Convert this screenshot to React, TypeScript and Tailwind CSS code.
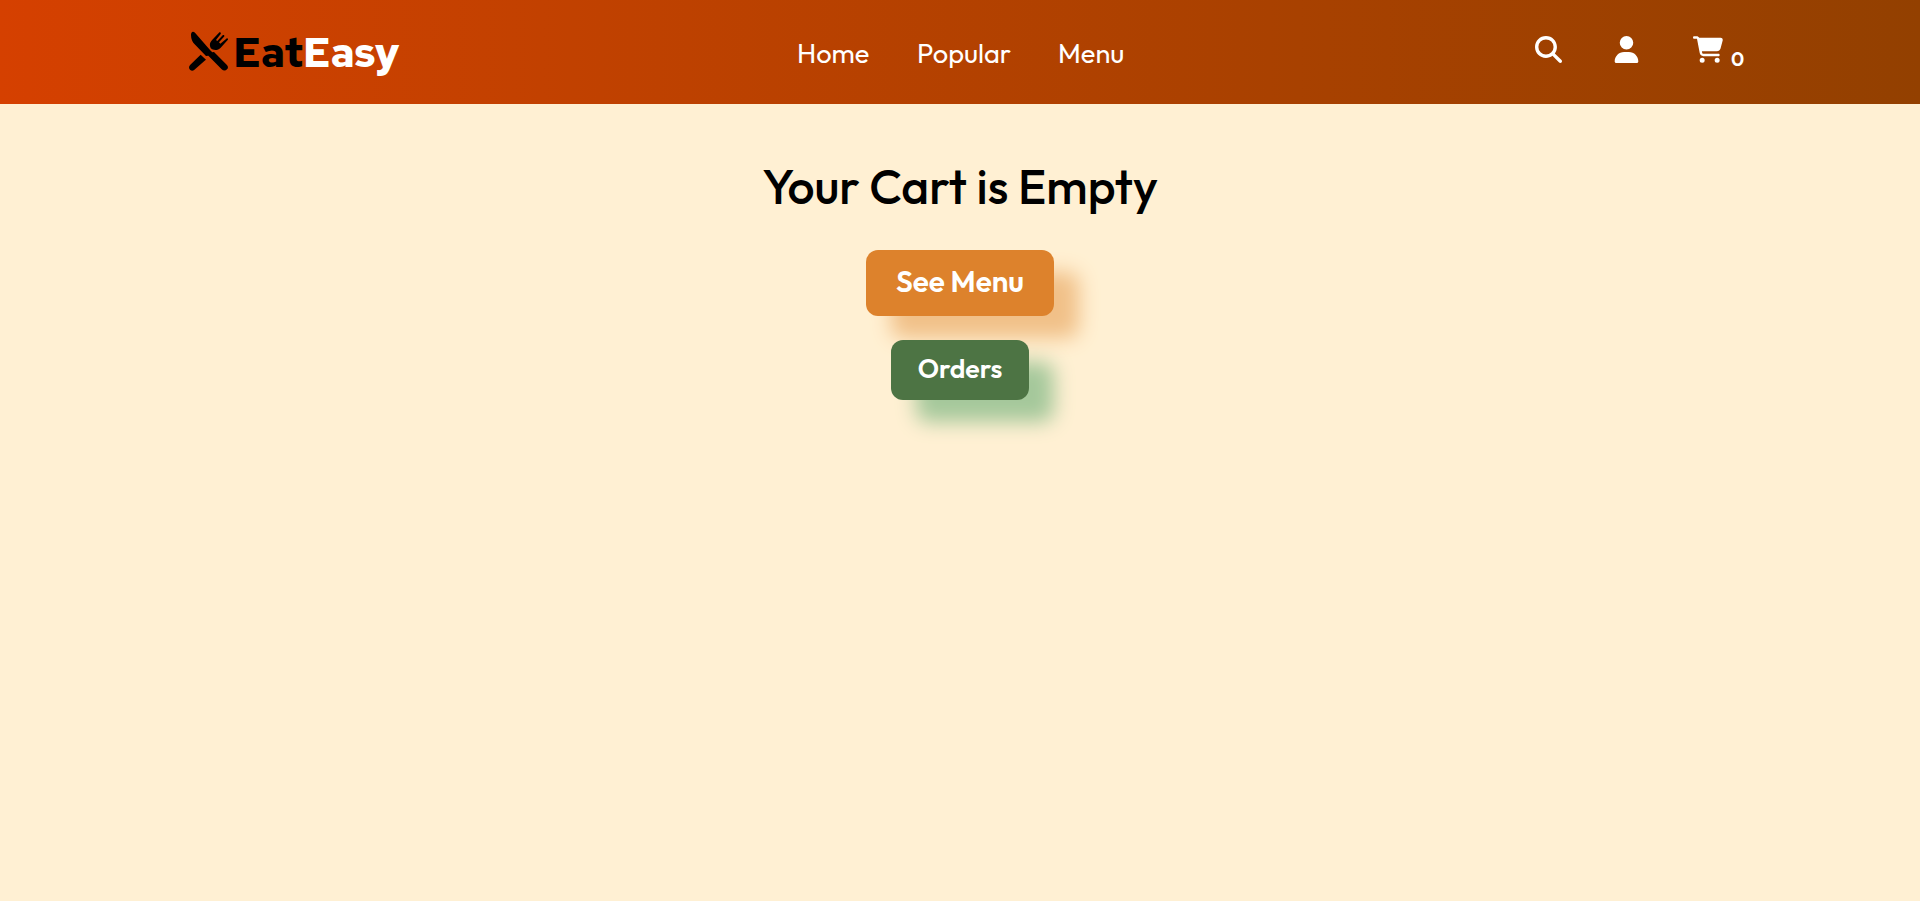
import { FaMagnifyingGlass, FaUser, FaCartShopping } from "react-icons/fa6";

function CutleryIcon() {
  return (
    <svg viewBox="6 15 120 120" className="size-[40px]" fill="currentColor">
      <path d="M21 17 C17 17 15 21 15 27 C15 39 19 48 26 55 L60 90 L67 89 L107 130 C112 135 119 135 123 130 C127 126 127 120 122 116 L84 78 L79 79 L74 74 L27 20 C25 18 23 17 21 17 Z" />
      <path d="M44 86 L60 101 L56 104 L27 130 C23 135 16 135 12 131 C8 127 8 120 13 116 L40 90 Z" />
      <path d="M74 66 C69 56 72 48 79 41 L99 20 C102 17 106 21 104 24 L90 42 L94 45 L110 28 C113 25 117 29 114 32 L99 49 L103 53 L121 38 C124 35 128 39 125 42 L104 65 C96 73 83 75 74 66 Z" />
    </svg>
  );
}

export default function App() {
  return (
    <div className="min-h-screen bg-[#fff0d3] font-[Outfit,Lato,sans-serif]">
      <header className="flex h-[104px] items-start bg-linear-to-r from-[#d54000] to-[#934000] pl-[188px] text-white">
        <a className="mt-[28px] flex h-[46px] w-[609px] items-center text-black">
          <CutleryIcon />
          <span className="ml-[5px] pt-px font-[Red_Hat_Text,Figtree,Lato,sans-serif] text-[42px] leading-none font-bold tracking-[-0.4px]">
            Eat<span className="text-white">Easy</span>
          </span>
        </a>
        <nav className="mt-[33px] flex w-[738px] text-[27.2px] leading-[40px] font-normal">
          <a className="w-[120px]">Home</a>
          <a className="w-[141px]">Popular</a>
          <a>Menu</a>
        </nav>
        <div className="mt-[36px] flex items-start">
          <FaMagnifyingGlass className="size-[27px]" />
          <FaUser className="ml-[51px] h-[27px] w-[27px]" />
          <FaCartShopping className="ml-[53px] h-[27px] w-[30px]" />
          <span className="mt-[12px] ml-[8px] text-[20px] leading-[22px] font-semibold">0</span>
        </div>
      </header>
      <main className="flex flex-col items-center pt-[46px]">
        <h1 className="text-[48px] leading-[72px] font-medium">Your Cart is Empty</h1>
        <button className="mt-[28px] h-[66px] w-[188px] rounded-xl bg-[#dd822c] pb-[3px] text-[29.6px] leading-none font-semibold text-white shadow-[25px_22px_20px_#f1c088]">
          See Menu
        </button>
        <button className="mt-[24px] h-[60px] w-[138px] rounded-xl bg-[#4d7444] pb-[4px] text-[26.6px] leading-none font-semibold text-white shadow-[25px_22px_20px_#a5c89b]">
          Orders
        </button>
      </main>
    </div>
  );
}
